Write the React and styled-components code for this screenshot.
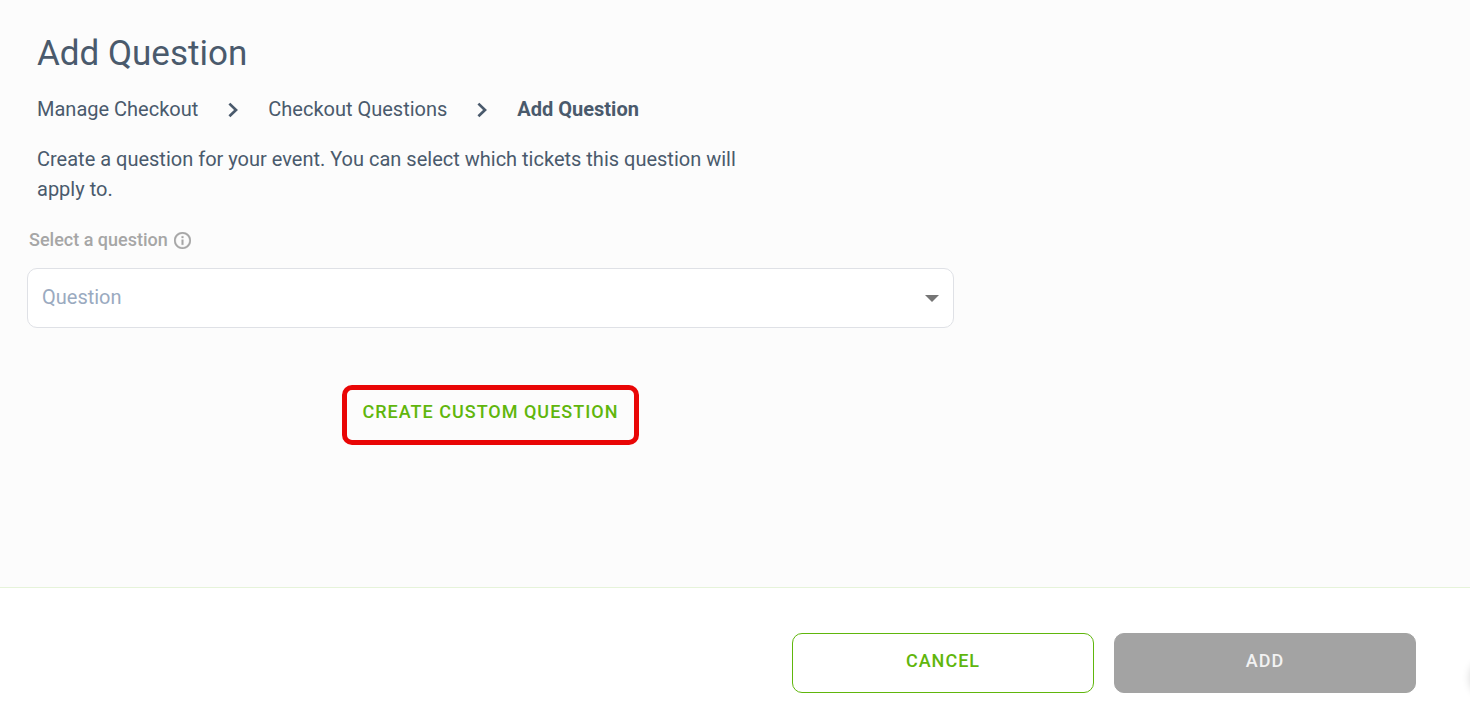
import React, { useState } from 'react'
import styled, { createGlobalStyle } from 'styled-components'

const crumbs = ['Manage Checkout', 'Checkout Questions']

const App = () => {
  const [question, setQuestion] = useState('')

  return (
    <Page>
      <GlobalStyle />
      <Main>
        <Intro>
          <Title>Add Question</Title>
          <Breadcrumbs aria-label='Breadcrumb'>
            {crumbs.map(crumb => (
              <React.Fragment key={crumb}>
                <Crumb href='#'>{crumb}</Crumb>
                <Chevron />
              </React.Fragment>
            ))}
            <Current aria-current='page'>Add Question</Current>
          </Breadcrumbs>
          <Description>
            Create a question for your event. You can select which tickets this question will apply to.
          </Description>
        </Intro>
        <Field>
          <LabelRow>
            <Label htmlFor='question'>Select a question</Label>
            <InfoIcon />
          </LabelRow>
          <SelectBox>
            <Select id='question' value={question} onChange={e => setQuestion(e.target.value)}>
              <option value=''>Question</option>
            </Select>
            <Arrow viewBox='0 0 14 7' aria-hidden='true'>
              <path d='M0 0h14L7 7z' fill='#757575' />
            </Arrow>
          </SelectBox>
          <CustomButton type='button'>Create custom question</CustomButton>
        </Field>
      </Main>
      <Footer>
        <FooterButton type='button'>Cancel</FooterButton>
        <FooterButton type='button' disabled>Add</FooterButton>
      </Footer>
      <DrawerHandle />
    </Page>
  )
}

const Chevron = () => (
  <ChevronSvg viewBox='0 0 10 16' aria-hidden='true'>
    <path d='M1.4 2.6L8 9l-6.6 6.2' fill='none' stroke='#4a5a6c' strokeWidth='2.7' />
  </ChevronSvg>
)

const InfoIcon = () => (
  <InfoSvg viewBox='2 2 20 20' aria-hidden='true'>
    <path
      fill='#a6a6a6'
      stroke='#a6a6a6'
      strokeWidth='0.4'
      d='M11 7h2v2h-2zm0 4h2v6h-2zm1-9C6.48 2 2 6.48 2 12s4.48 10 10 10 10-4.48 10-10S17.52 2 12 2zm0 18c-4.41 0-8-3.59-8-8s3.59-8 8-8 8 3.59 8 8-3.59 8-8 8z'
    />
  </InfoSvg>
)

export default App

const GlobalStyle = createGlobalStyle`
  * {
    box-sizing: border-box;
  }

  body {
    margin: 0;
    background: #fcfcfc;
    color: #4a5a6c;
    font-family: Roboto, 'Liberation Sans', sans-serif;
  }

  button, select {
    font-family: inherit;
  }
`

const Page = styled.div`
  display: flex;
  flex-direction: column;
  min-height: 100vh;
`

const Main = styled.main`
  flex: 1;
  padding: 32px 27px;
`

const Intro = styled.header`
  max-width: 740px;
  padding: 0 10px;
`

const Title = styled.h1`
  margin: 0;
  font-size: 35px;
  font-weight: 400;
  line-height: 44px;
`

const Breadcrumbs = styled.nav`
  display: flex;
  flex-wrap: wrap;
  align-items: center;
  gap: 30px;
  margin-top: 18px;
  font-size: 20px;
  line-height: 30px;
`

const Crumb = styled.a`
  color: inherit;
  text-decoration: none;
`

const Current = styled.span`
  font-weight: 700;
`

const ChevronSvg = styled.svg`
  width: 10px;
  height: 16px;
  overflow: visible;
`

const Description = styled.p`
  margin: 20px 0 0;
  font-size: 20px;
  line-height: 30px;
`

const Field = styled.div`
  display: flex;
  flex-direction: column;
  max-width: 927px;
  margin-top: 24px;
`

const LabelRow = styled.div`
  display: flex;
  align-items: center;
  gap: 6px;
  padding-left: 2px;
  color: #a6a6a6;
`

const Label = styled.label`
  font-size: 18px;
  font-weight: 500;
  line-height: 24px;
`

const InfoSvg = styled.svg`
  width: 17px;
  height: 17px;
`

const SelectBox = styled.div`
  position: relative;
  margin-top: 16px;
`

const Select = styled.select`
  display: block;
  width: 100%;
  height: 60px;
  padding: 0 40px 2px 14px;
  appearance: none;
  background: #fff;
  border: 1px solid #dfe1e6;
  border-radius: 10px;
  color: #9aaac0;
  font-size: 20px;
`

const Arrow = styled.svg`
  position: absolute;
  top: 27px;
  right: 15px;
  width: 14px;
  height: 7px;
  pointer-events: none;
`

const CustomButton = styled.button`
  align-self: center;
  height: 60px;
  margin-top: 57px;
  padding: 0 16px 8px;
  background: transparent;
  border: 5px solid #e90606;
  border-radius: 10px;
  color: #60b60c;
  font-size: 18px;
  font-weight: 500;
  letter-spacing: 1px;
  text-transform: uppercase;
  cursor: pointer;
`

const Footer = styled.footer`
  display: flex;
  justify-content: flex-end;
  gap: 20px;
  padding: 45px 54px 29px;
  background: #fff;
  border-top: 1px solid #e6f3da;
`

const FooterButton = styled.button`
  flex: 0 1 302px;
  height: 60px;
  padding: 0 16px 6px;
  background: #fff;
  border: 1px solid #60b60c;
  border-radius: 10px;
  color: #60b60c;
  font-size: 18px;
  font-weight: 500;
  letter-spacing: 1px;
  text-transform: uppercase;
  cursor: pointer;

  &:disabled {
    background: #a3a3a3;
    border-color: #a3a3a3;
    color: #f2f2f2;
    cursor: default;
  }
`

/* parked just past the right edge, only its shadow shows */
const DrawerHandle = styled.div`
  position: fixed;
  right: -40px;
  bottom: 24px;
  width: 40px;
  height: 40px;
  border-radius: 20px;
  box-shadow: 0 0 8px rgba(0, 0, 0, 0.16);
`
